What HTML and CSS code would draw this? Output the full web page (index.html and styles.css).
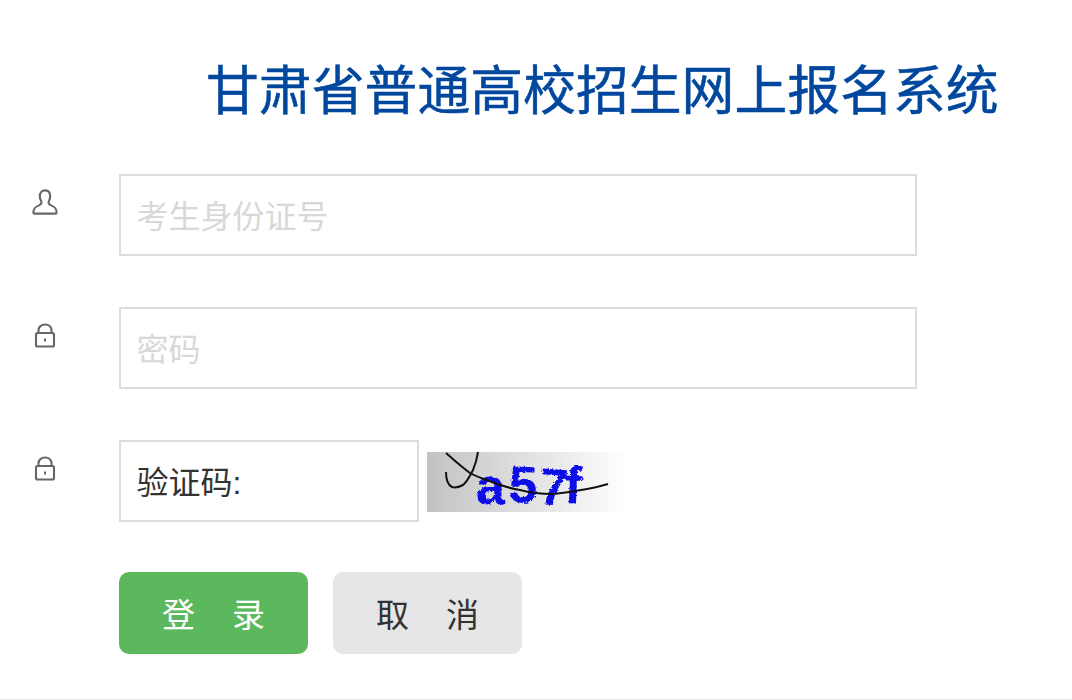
FILE: index.html
```html
<!DOCTYPE html>
<html lang="zh-CN">
<head>
  <meta charset="UTF-8">
  <meta name="viewport" content="width=device-width, initial-scale=1.0">
  <title>甘肃省普通高校招生网上报名系统</title>
  <link rel="stylesheet" href="styles.css">
</head>
<body>
  <div class="login">
    <h1 class="title">甘肃省普通高校招生网上报名系统</h1>

    <!-- 身份证号 -->
    <div class="row">
      <div class="row-icon">
        <svg width="26" height="26" viewBox="0 0 26 26" fill="none" stroke="#666" stroke-width="2.1">
          <path d="M7.8 7.5C7.8 3.6 10 1.4 13 1.4S18.2 3.6 18.2 7.5C18.2 10 17 11.4 16.6 12.8C16.2 14.6 17.2 15.6 19 16.4C22 17.6 24.6 18.8 24.6 23.4C24.6 24.2 24.2 24.6 23.4 24.6H2.6C1.8 24.6 1.4 24.2 1.4 23.4C1.4 18.8 4 17.6 7 16.4C8.8 15.6 9.8 14.6 9.4 12.8C9 11.4 7.8 10 7.8 7.5Z"/>
        </svg>
      </div>
      <div class="field"><input class="input" type="text" placeholder="考生身份证号"></div>
    </div>

    <!-- 密码 -->
    <div class="row">
      <div class="row-icon row-icon-lock">
        <svg width="26" height="26" viewBox="0 0 26 26" fill="none" stroke="#666" stroke-width="2.1">
          <path d="M6.5 10.5V7.5C6.5 3.8 9.4 1.5 13 1.5S19.5 3.8 19.5 7.5V10.5"/>
          <rect x="4" y="10" width="18" height="13.5" rx="1.5"/>
          <rect x="12" y="15.5" width="2" height="3" fill="#666" stroke="none"/>
        </svg>
      </div>
      <div class="field"><input class="input" type="password" placeholder="密码"></div>
    </div>

    <!-- 验证码 -->
    <div class="row">
      <div class="row-icon row-icon-lock">
        <svg width="26" height="26" viewBox="0 0 26 26" fill="none" stroke="#666" stroke-width="2.1">
          <path d="M6.5 10.5V7.5C6.5 3.8 9.4 1.5 13 1.5S19.5 3.8 19.5 7.5V10.5"/>
          <rect x="4" y="10" width="18" height="13.5" rx="1.5"/>
          <rect x="12" y="15.5" width="2" height="3" fill="#666" stroke="none"/>
        </svg>
      </div>
      <div class="field field-code">
        <input class="input input-code" type="text" placeholder="验证码:">
        <svg class="captcha" width="200" height="60" viewBox="0 0 200 60">
          <defs>
            <linearGradient id="captchaBg" x1="0" x2="1" y1="0" y2="0">
              <stop offset="0" stop-color="#c2c2c2"/>
              <stop offset="1" stop-color="#ffffff"/>
            </linearGradient>
            <filter id="captchaRough" x="-5%" y="-10%" width="110%" height="120%">
              <feTurbulence type="fractalNoise" baseFrequency="0.45" numOctaves="2" seed="4"/>
              <feDisplacementMap in="SourceGraphic" scale="3.5"/>
              <feGaussianBlur stdDeviation="0.4"/>
            </filter>
          </defs>
          <rect width="200" height="60" fill="url(#captchaBg)"/>
          <text class="captcha-text" filter="url(#captchaRough)" x="49 81 111 137" y="52 50 52 51" rotate="0 2 4 2">a57f</text>
          <path d="M19 1C28 9 36 16 43 21C48 24 54 26 60 28C71 33 82 36 93 38C104 41 115 42 126 42C138 41 149 39 160 37C167 36 174 34 181 32" fill="none" stroke="#111" stroke-width="2"/>
          <path d="M51 0C50 7 48 13 46 18C43 24 40 30 36 33C32 35 28 36 25 35C21 33 19 27 19 20" fill="none" stroke="#111" stroke-width="2"/>
        </svg>
      </div>
    </div>

    <div class="actions">
      <button class="btn btn-login">登　录</button>
      <button class="btn btn-cancel">取　消</button>
    </div>
  </div>
</body>
</html>
```

FILE: styles.css
```css
body {
  background-color: #fff;
  color: #333;
  font-family: "Liberation Sans", "Noto Sans CJK SC", sans-serif;
  margin: 0;
  box-sizing: border-box;
  height: 700px;
  overflow: hidden;
  border-bottom: 1px solid #e5e5e5;
}
.login {
  width: 1072px;
}
.title {
  margin: 0 0 50px;
  padding: 60px 0 0 206px;
  color: #00479d;
  font-size: 52.85px;
  font-weight: normal;
  line-height: 64px;
  white-space: nowrap;
  -webkit-text-stroke: 0.5px #00479d;
}
.row {
  display: flex;
  height: 82px;
  margin-bottom: 51px;
}
.row-icon {
  width: 90px;
  margin-right: 29px;
  padding-top: 15px;
  display: flex;
  justify-content: center;
  align-items: flex-start;
}
.row-icon-lock {
  padding-top: 16px;
}
.field {
  flex: none;
  display: flex;
  align-items: center;
}
.input {
  box-sizing: border-box;
  width: 798px;
  height: 82px;
  padding: 4px 16px 0 15.5px;
  background-color: #fff;
  border: 2px solid #ddd;
  color: #333;
  font-family: inherit;
  font-size: 32px;
}
.input::placeholder {
  color: #d8d8d8;
  opacity: 1;
}
.input-code {
  width: 300px;
  margin-right: 8px;
}
.input-code::placeholder {
  color: #333;
}
.captcha {
  display: block;
  margin-top: 2px;
}
.captcha-text {
  fill: #0a0ae6;
  font-family: "Liberation Sans", sans-serif;
  font-size: 52px;
  font-weight: bold;
}
.actions {
  display: flex;
  gap: 25px;
  margin-left: 119px;
  margin-top: -1px;
}
.btn {
  width: 189px;
  height: 82px;
  padding: 0 0 0 2px;
  border: none;
  border-radius: 10px;
  font-family: inherit;
  font-size: 33px;
  letter-spacing: 2px;
}
.btn-login {
  background-color: #5cb85c;
  color: #fff;
}
.btn-cancel {
  background-color: #e6e6e6;
  color: #333;
}
```
